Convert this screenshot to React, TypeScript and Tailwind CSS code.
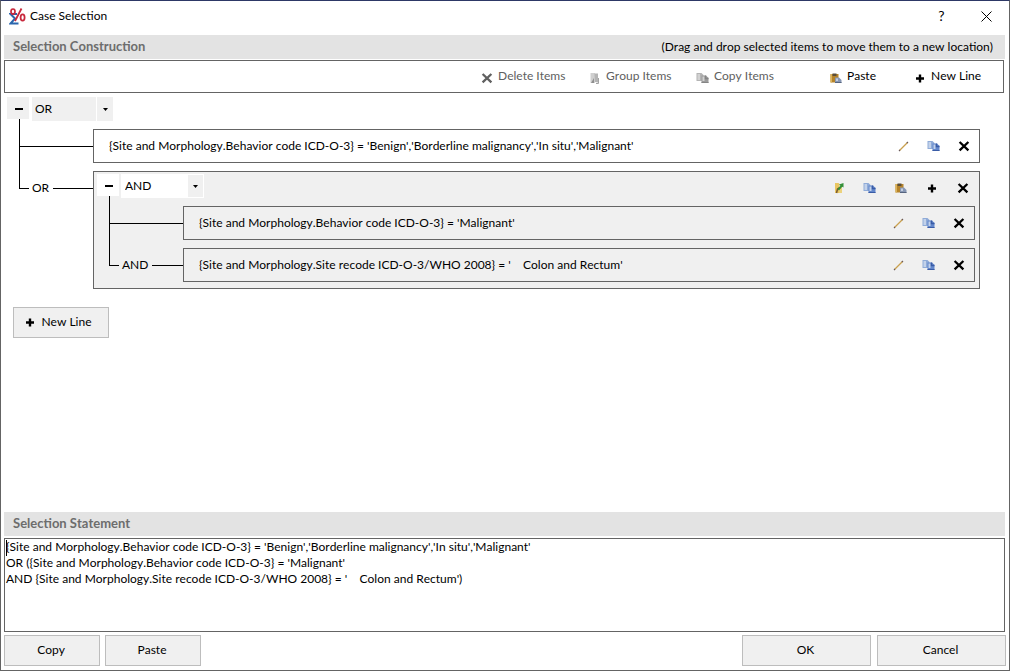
import { ReactNode, useState } from "react";

const BEHAVIOR = "{Site and Morphology.Behavior code ICD-O-3}"
const SITE = "{Site and Morphology.Site recode ICD-O-3/WHO 2008}"

const STATEMENT = `${BEHAVIOR} = 'Benign','Borderline malignancy','In situ','Malignant'
OR (${BEHAVIOR} = 'Malignant'
AND ${SITE} = '    Colon and Rectum')`

function LogoIcon() {
  return (
    <svg width="17" height="17" viewBox="0 0 17 17" fill="none" aria-hidden="true">
      <path d="M8 6H1.5L6 10.5L1.5 15.5H9.5" stroke="#2a66ad" strokeWidth="2" />
      <ellipse cx="4" cy="3.6" rx="2" ry="2.6" stroke="#c8283c" strokeWidth="1.7" />
      <ellipse cx="13.6" cy="9.5" rx="2" ry="3.2" stroke="#c8283c" strokeWidth="1.8" />
      <path d="M12.5 0.5L6 13" stroke="#c8283c" strokeWidth="1.8" />
    </svg>
  )
}

function DeleteIcon() {
  return (
    <svg width="16" height="16" viewBox="0 0 16 16" fill="none" stroke="currentColor" aria-hidden="true">
      <path d="M3.6 4L12.4 12.4M12.4 4L3.6 12.4" strokeWidth="2.3" />
    </svg>
  )
}

function PlusIcon() {
  return (
    <svg width="16" height="16" viewBox="0 0 16 16" fill="none" stroke="currentColor" aria-hidden="true">
      <path d="M8 4.5V12.5M4 8.5H12" strokeWidth="2.4" />
    </svg>
  )
}

function PencilIcon() {
  return (
    <svg width="16" height="16" viewBox="0 0 16 16" fill="none" aria-hidden="true">
      <path d="M3.5 12.5L11.5 4.5" stroke="#c9a04e" strokeWidth="1.3" />
      <path d="M3 13L4 12M10.8 5.2L12 4" stroke="#6b5a5a" strokeWidth="1.2" />
    </svg>
  )
}

function CopyIcon({ disabled = false }: { disabled?: boolean }) {
  const light = disabled ? "#d2d2d2" : "#c3d2ea"
  const back = disabled ? "#b4b4b4" : "#8fabd8"
  const front = disabled ? "#9c9c9c" : "#6488cc"
  const edge = disabled ? "#858585" : "#3a5ca6"
  return (
    <svg width="16" height="16" viewBox="0 0 16 16" aria-hidden="true">
      <path d="M1.5 3H6.5L8.5 5V11H1.5Z" fill={back} />
      <path d="M2.5 4H5V10H2.5Z" fill={light} />
      <path d="M6.5 5.5H11L13.5 8V13H6.5Z" fill={front} />
      <path d="M7.5 6.5H9.5V11H7.5Z" fill={light} />
      <path d="M10.5 5.5V8.5H13.5" stroke={edge} strokeWidth="1.4" fill="none" />
      <path d="M6.5 12.5H13.5" stroke={edge} />
    </svg>
  )
}

function PasteIcon() {
  return (
    <svg width="16" height="16" viewBox="0 0 16 16" aria-hidden="true">
      <path d="M2.5 4H10.5V12.5H2.5Z" fill="#b5832a" />
      <path d="M2.5 4H4V12.5H2.5Z" fill="#dcb45a" />
      <path d="M4.5 3.5H8.5V6H4.5Z" fill="#5b4e3a" />
      <path d="M7 7.5H11L13.5 10V13H7Z" fill="#8797b4" />
      <path d="M8 8.5H10V11H8Z" fill="#c3cddf" />
      <path d="M7 12.5H13.5" stroke="#56647f" />
    </svg>
  )
}

function GroupIcon() {
  return (
    <svg width="16" height="16" viewBox="0 0 16 16" aria-hidden="true">
      <path d="M3.5 3H8V13H3.5Z" fill="#cfcfcf" />
      <path d="M7.5 3.5H11V12.5L8 12Z" fill="#b4b4b4" />
      <path d="M4 13L7 8V13Z" fill="#8d8d8d" />
      <path d="M11.5 8V13.5H9" stroke="#a3a3a3" fill="none" />
    </svg>
  )
}

function UngroupIcon() {
  return (
    <svg width="16" height="16" viewBox="0 0 16 16" aria-hidden="true">
      <path d="M4 3H7.5L8.5 4V13H4Z" fill="#e9c661" />
      <path d="M8 7H11V13H8Z" fill="#ecd27c" />
      <path d="M5.5 13L6.5 9L9 7.5" stroke="#7a5a30" strokeWidth="1.5" fill="none" />
      <path d="M8 4.5L12.5 3V7.5L11.2 6.8L8 10.5L6.5 9L9.4 5.8Z" fill="#359038" />
    </svg>
  )
}

function MinusButton({ className }: { className: string }) {
  return (
    <button aria-label="Collapse" className={`flex h-[22px] w-[22px] items-center justify-center pt-0.5 pl-0.5 ${className}`}>
      <span className="h-[2px] w-2 bg-black" />
    </button>
  )
}

function IconButton({ label, children }: { label: string, children: ReactNode }) {
  return (
    <button aria-label={label} className="flex h-8 w-[30px] items-center justify-center text-black hover:bg-gray-200">
      {children}
    </button>
  )
}

function ToolButton({ label, icon, disabled = false, className }: { label: string, icon: ReactNode, disabled?: boolean, className: string }) {
  return (
    <button disabled={disabled} className={`flex items-center gap-[3px] whitespace-nowrap ${disabled ? "text-[#606060]" : "text-black"} ${className}`}>
      <span className="pt-[2px]">{icon}</span>
      <span className="pb-0.5">{label}</span>
    </button>
  )
}

function PushButton({ children, className }: { children: ReactNode, className: string }) {
  return (
    <button className={`flex h-[31px] items-center justify-center border border-[#bdbdbd] bg-[#f0f0f0] pb-0.5 hover:bg-gray-200 ${className}`}>
      {children}
    </button>
  )
}

function OperatorSelect({ initial, nested = false }: { initial: string, nested?: boolean }) {
  const [value, setValue] = useState(initial)
  return (
    <div className="relative">
      <select
        aria-label="Operator"
        value={value}
        onChange={(e) => setValue(e.target.value)}
        className={`block h-6 appearance-none ${nested ? "w-[83px] bg-white pl-1" : "w-[81px] bg-[#f0f0f0] pl-[3px]"}`}
      >
        <option>OR</option>
        <option>AND</option>
      </select>
      <span className={`pointer-events-none absolute inset-y-0 right-0 flex w-[17px] items-center justify-center border-white bg-[#f0f0f0] ${nested ? "border" : "border-l"}`}>
        <svg width="5" height="3" viewBox="0 0 5 3" aria-hidden="true">
          <path d="M0 0H5L2.5 3Z" fill="#000000" />
        </svg>
      </span>
    </div>
  )
}

// One branch of the tree: the elbow on the left, the boxed content on the right
function Branch({ label, last = false, children }: { label?: string, last?: boolean, children: ReactNode }) {
  return (
    <li className="ml-3 flex">
      <span className={`w-px shrink-0 bg-black ${last ? "h-[26px]" : ""}`} />
      <div className="mt-2 -mb-px flex h-[35px] w-[73px] shrink-0 items-center">
        {label && (
          <>
            <span className="h-px w-[9px] bg-black" />
            <span className="pr-1 pb-0.5 pl-[3px]">{label}</span>
          </>
        )}
        <span className="h-px flex-1 bg-black" />
      </div>
      <div className="min-w-0 flex-1 pt-2">{children}</div>
    </li>
  )
}

function Condition({ text }: { text: string }) {
  return (
    <div className="flex h-[34px] items-center border border-[#646464] pl-[15px]">
      <span className="flex-1 overflow-hidden whitespace-pre">{text}</span>
      <IconButton label="Edit"><PencilIcon /></IconButton>
      <IconButton label="Copy"><CopyIcon /></IconButton>
      <IconButton label="Delete"><DeleteIcon /></IconButton>
    </div>
  )
}

export default function App() {
  return (
    <div className="flex min-h-screen flex-col border border-t-[#2d3866] border-[#646464] bg-white pr-1 pb-1 pl-[3px] font-['Lato',sans-serif] text-xs text-black [font-kerning:none]">
      <header className="-mr-1 flex h-[34px] items-center pb-1 pl-[5px]">
        <LogoIcon />
        <h1 className="flex-1 pl-1">Case Selection</h1>
        <button aria-label="Help" className="flex h-[30px] w-[45px] items-center justify-center self-start text-sm">?</button>
        <button aria-label="Close" className="flex h-[30px] w-[45px] items-center justify-center self-start">
          <svg width="11" height="11" viewBox="0 0 11 11" stroke="#000000" aria-hidden="true">
            <path d="M0.5 0.5L10.5 10.5M10.5 0.5L0.5 10.5" />
          </svg>
        </button>
      </header>

      <div className="flex h-6 items-center justify-between bg-[#e3e3e3] pr-3 pl-[9px]">
        <h2 className="text-[13px] font-bold text-[#6d6d6d]">Selection Construction</h2>
        <span>(Drag and drop selected items to move them to a new location)</span>
      </div>
      <div className="mt-px mr-px flex h-[33px] justify-end border border-[#646464]">
        <ToolButton label="Delete Items" icon={<DeleteIcon />} disabled className="w-[108px]" />
        <ToolButton label="Group Items" icon={<GroupIcon />} disabled className="w-[108px]" />
        <ToolButton label="Copy Items" icon={<CopyIcon disabled />} disabled className="w-[133px]" />
        <ToolButton label="Paste" icon={<PasteIcon />} className="w-[84px]" />
        <ToolButton label="New Line" icon={<PlusIcon />} className="w-[91px]" />
      </div>

      <main className="flex-1 pt-1 pr-[25px] pb-4 pl-[3px]">
        <div className="flex h-6 gap-[3px]">
          <div className="flex flex-col">
            <MinusButton className="bg-[#f0f0f0]" />
            <span className="ml-3 w-px flex-1 bg-black" />
          </div>
          <OperatorSelect initial="OR" />
        </div>
        <ul>
          <Branch>
            <Condition text={`${BEHAVIOR} = 'Benign','Borderline malignancy','In situ','Malignant'`} />
          </Branch>
          <Branch label="OR" last>
            <div className="border border-[#646464] bg-[#f0f0f0] pb-[6px]">
              <div className="flex pr-px pl-[3px]">
                <div className="flex h-[26px] flex-1 gap-[2px] pt-[2px]">
                  <div className="flex flex-col">
                    <MinusButton className="bg-white" />
                    <span className="ml-3 w-px flex-1 bg-black" />
                  </div>
                  <OperatorSelect initial="AND" nested />
                </div>
                <div className="flex h-[26px] gap-px">
                  <IconButton label="Ungroup"><UngroupIcon /></IconButton>
                  <IconButton label="Copy"><CopyIcon /></IconButton>
                  <IconButton label="Paste"><PasteIcon /></IconButton>
                  <IconButton label="Add line"><PlusIcon /></IconButton>
                  <IconButton label="Delete"><DeleteIcon /></IconButton>
                </div>
              </div>
              <ul className="pr-1 pl-[3px]">
                <Branch>
                  <Condition text={`${BEHAVIOR} = 'Malignant'`} />
                </Branch>
                <Branch label="AND" last>
                  <Condition text={`${SITE} = '    Colon and Rectum'`} />
                </Branch>
              </ul>
            </div>
          </Branch>
        </ul>
        <PushButton className="mt-[18px] ml-[6px] w-24 gap-[3px] pr-2">
          <PlusIcon />
          New Line
        </PushButton>
      </main>

      <h2 className="flex h-6 items-center bg-[#e3e3e3] pl-[9px] text-[13px] font-bold text-[#6d6d6d]">
        <label htmlFor="statement">Selection Statement</label>
      </h2>
      <div className="relative mt-[2px]">
        <textarea
          id="statement"
          readOnly
          defaultValue={STATEMENT}
          className="block h-[94px] w-full resize-none border border-[#646464] px-px leading-4 outline-none"
        />
        <span className="absolute top-[2px] left-[2px] h-4 w-px bg-black" />
      </div>
      <footer className="-mr-px mt-[3px] flex gap-[5px]">
        <PushButton className="w-24 pr-0.5">Copy</PushButton>
        <PushButton className="w-24 pr-0.5">Paste</PushButton>
        <div className="flex flex-1 justify-end gap-[6px]">
          <PushButton className="w-[129px] pr-0.5">OK</PushButton>
          <PushButton className="w-[129px] pr-0.5">Cancel</PushButton>
        </div>
      </footer>
    </div>
  )
}
